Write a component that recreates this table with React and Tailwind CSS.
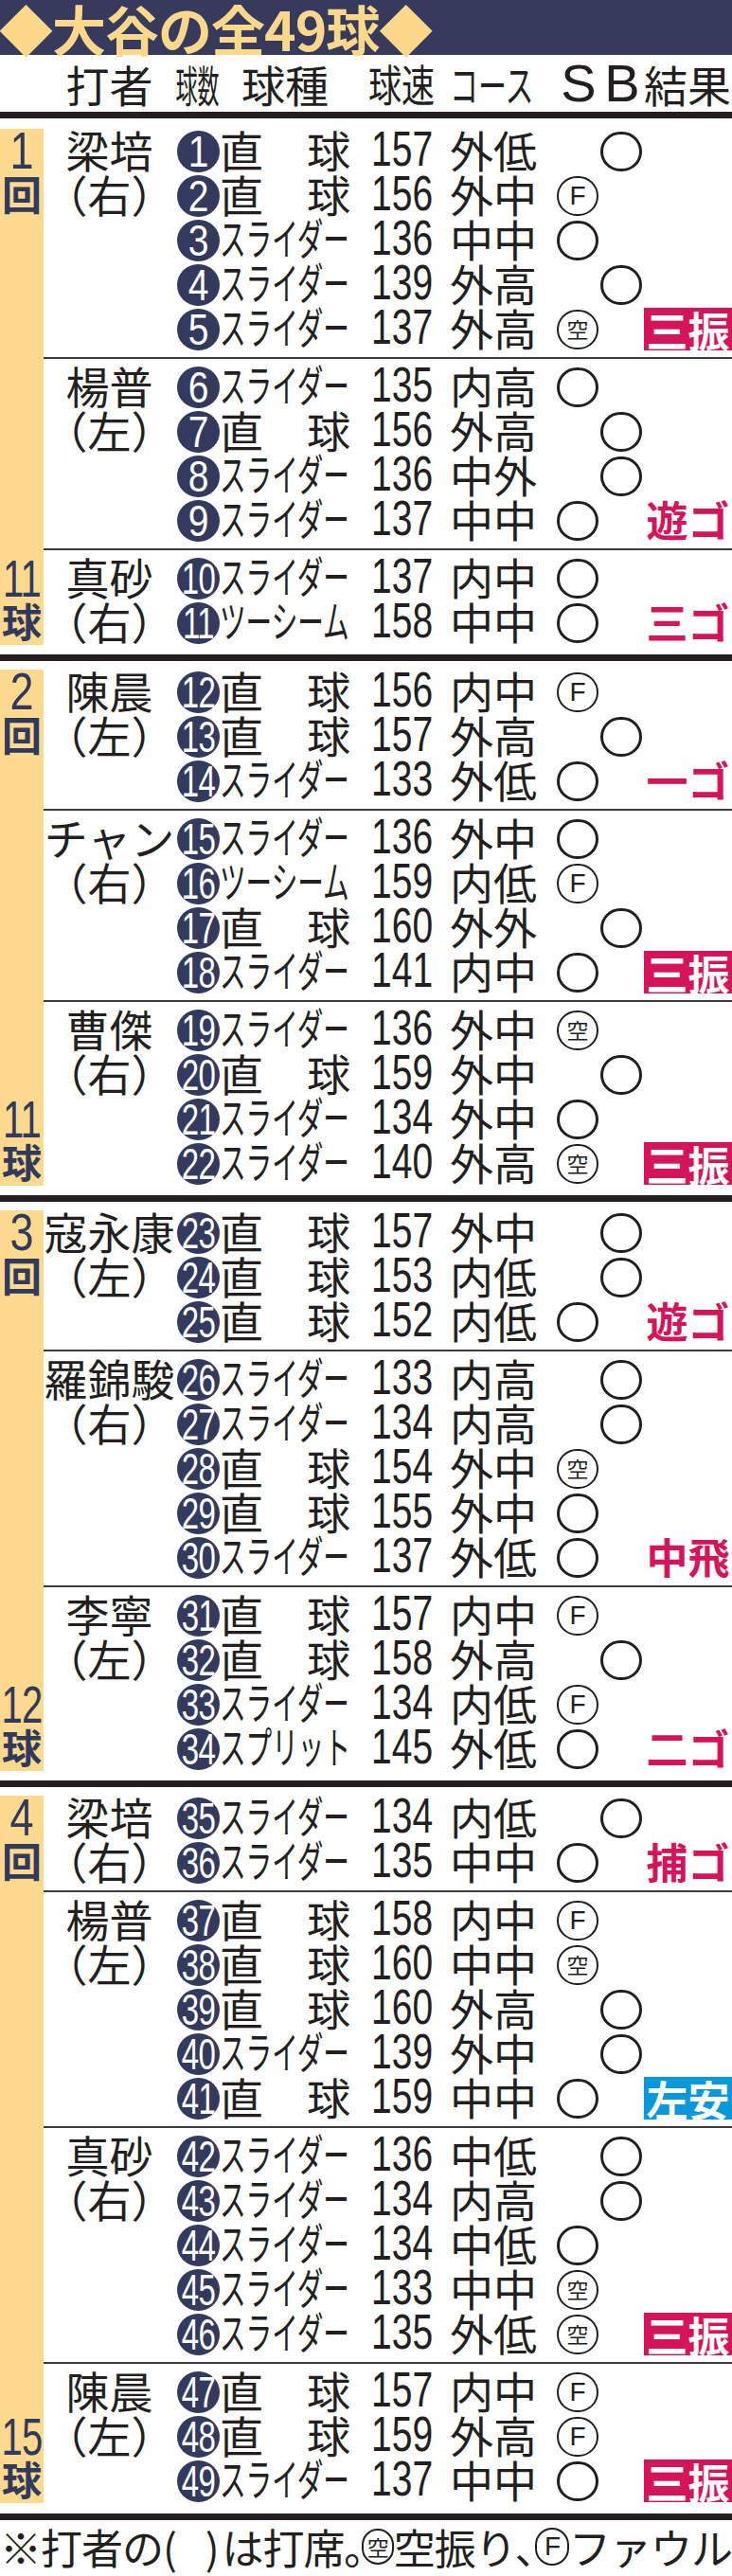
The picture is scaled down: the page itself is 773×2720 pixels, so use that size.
import React from 'react';

const I = [
  { n: '1', total: '11', batters: [
    { name: '梁培', hand: '右', p: [
      [1, '直球', 157, '外低', 'B', 'O'],
      [2, '直球', 156, '外中', 'S', 'F'],
      [3, 'スライダー', 136, '中中', 'S', 'O'],
      [4, 'スライダー', 139, '外高', 'B', 'O'],
      [5, 'スライダー', 137, '外高', 'S', 'K', '三振', 'red'],
    ]},
    { name: '楊普', hand: '左', p: [
      [6, 'スライダー', 135, '内高', 'S', 'O'],
      [7, '直球', 156, '外高', 'B', 'O'],
      [8, 'スライダー', 136, '中外', 'B', 'O'],
      [9, 'スライダー', 137, '中中', 'S', 'O', '遊ゴ', 'text'],
    ]},
    { name: '真砂', hand: '右', p: [
      [10, 'スライダー', 137, '内中', 'S', 'O'],
      [11, 'ツーシーム', 158, '中中', 'S', 'O', '三ゴ', 'text'],
    ]},
  ]},
  { n: '2', total: '11', batters: [
    { name: '陳晨', hand: '左', p: [
      [12, '直球', 156, '内中', 'S', 'F'],
      [13, '直球', 157, '外高', 'B', 'O'],
      [14, 'スライダー', 133, '外低', 'S', 'O', '一ゴ', 'text'],
    ]},
    { name: 'チャン', hand: '右', p: [
      [15, 'スライダー', 136, '外中', 'S', 'O'],
      [16, 'ツーシーム', 159, '内低', 'S', 'F'],
      [17, '直球', 160, '外外', 'B', 'O'],
      [18, 'スライダー', 141, '内中', 'S', 'O', '三振', 'red'],
    ]},
    { name: '曹傑', hand: '右', p: [
      [19, 'スライダー', 136, '外中', 'S', 'K'],
      [20, '直球', 159, '外中', 'B', 'O'],
      [21, 'スライダー', 134, '外中', 'S', 'O'],
      [22, 'スライダー', 140, '外高', 'S', 'K', '三振', 'red'],
    ]},
  ]},
  { n: '3', total: '12', batters: [
    { name: '寇永康', hand: '左', p: [
      [23, '直球', 157, '外中', 'B', 'O'],
      [24, '直球', 153, '内低', 'B', 'O'],
      [25, '直球', 152, '内低', 'S', 'O', '遊ゴ', 'text'],
    ]},
    { name: '羅錦駿', hand: '右', p: [
      [26, 'スライダー', 133, '内高', 'B', 'O'],
      [27, 'スライダー', 134, '内高', 'B', 'O'],
      [28, '直球', 154, '外中', 'S', 'K'],
      [29, '直球', 155, '外中', 'S', 'O'],
      [30, 'スライダー', 137, '外低', 'S', 'O', '中飛', 'text'],
    ]},
    { name: '李寧', hand: '左', p: [
      [31, '直球', 157, '内中', 'S', 'F'],
      [32, '直球', 158, '外高', 'B', 'O'],
      [33, 'スライダー', 134, '内低', 'S', 'F'],
      [34, 'スプリット', 145, '外低', 'S', 'O', '二ゴ', 'text'],
    ]},
  ]},
  { n: '4', total: '15', batters: [
    { name: '梁培', hand: '右', p: [
      [35, 'スライダー', 134, '内低', 'B', 'O'],
      [36, 'スライダー', 135, '中中', 'S', 'O', '捕ゴ', 'text'],
    ]},
    { name: '楊普', hand: '左', p: [
      [37, '直球', 158, '内中', 'S', 'F'],
      [38, '直球', 160, '中中', 'S', 'K'],
      [39, '直球', 160, '外高', 'B', 'O'],
      [40, 'スライダー', 139, '外中', 'B', 'O'],
      [41, '直球', 159, '中中', 'S', 'O', '左安', 'blue'],
    ]},
    { name: '真砂', hand: '右', p: [
      [42, 'スライダー', 136, '中低', 'B', 'O'],
      [43, 'スライダー', 134, '内高', 'B', 'O'],
      [44, 'スライダー', 134, '中低', 'S', 'O'],
      [45, 'スライダー', 133, '中中', 'S', 'K'],
      [46, 'スライダー', 135, '外低', 'S', 'K', '三振', 'red'],
    ]},
    { name: '陳晨', hand: '左', p: [
      [47, '直球', 157, '内中', 'S', 'F'],
      [48, '直球', 159, '外高', 'S', 'F'],
      [49, 'スライダー', 137, '中中', 'S', 'O', '三振', 'red'],
    ]},
  ]},
];

function Ring() {
  return <div className="w-[44px] h-[42px] rounded-full border-[3.5px] border-[#231f20]" />;
}

function FoulMark({ small }) {
  return (
    <div className={small ? "w-[40px] h-[40px] rounded-full border-[2.5px] border-[#231f20] flex items-center justify-center" : "w-[44px] h-[42px] rounded-full border-[2.5px] border-[#231f20] flex items-center justify-center"}>
      <span className="font-['Liberation_Sans',sans-serif] text-[28px] leading-none">F</span>
    </div>
  );
}

function KuMark({ small }) {
  return (
    <div className={small ? "w-[38px] h-[38px] rounded-full border-[2.5px] border-[#231f20] flex items-center justify-center" : "w-[44px] h-[42px] rounded-full border-[2.5px] border-[#231f20] flex items-center justify-center"}>
      <span className="text-[23px] leading-none">空</span>
    </div>
  );
}

function Mark({ m }) {
  if (m === 'F') return <FoulMark />;
  if (m === 'K') return <KuMark />;
  return <Ring />;
}

function NumCircle({ n }) {
  const two = n >= 10;
  return (
    <div className="ml-[2px] w-[45px] h-[44px] rounded-full bg-[#343a5e] flex items-center justify-center">
      <span className={two
        ? "inline-block font-['Liberation_Sans',sans-serif] text-[33px] leading-none text-white scale-y-[1.39] tracking-[-0.7px] translate-y-[1px]"
        : "inline-block font-['Liberation_Sans',sans-serif] text-[39px] leading-none text-white scale-y-[1.18] translate-y-[1px]"}>{n}</span>
    </div>
  );
}

function PitchType({ t }) {
  if (t === '直球') {
    return (
      <div className="flex w-[138px] justify-between text-[46px] leading-none -translate-y-[3px]">
        <span>直</span><span>球</span>
      </div>
    );
  }
  return (
    <span className="inline-block whitespace-nowrap text-[27.6px] leading-none scale-y-[1.667] -translate-y-[3px]">{t}</span>
  );
}

function Result({ r, s }) {
  if (!r) return null;
  if (s === 'red') {
    return <div className="w-[93px] h-[45px] bg-[#d5145a] text-white font-bold text-[44px] leading-none flex items-center justify-center">{r}</div>;
  }
  if (s === 'blue') {
    return <div className="w-[93px] h-[45px] bg-[#0999db] text-white font-bold text-[44px] leading-none flex items-center justify-center">{r}</div>;
  }
  return <div className="w-[93px] h-[45px] text-[#d5145a] font-bold text-[44px] leading-none flex items-center justify-center -translate-y-[2px]">{r}</div>;
}

function PitchRow({ p }) {
  const [num, type, speed, course, col, mark, res, rs] = p;
  return (
    <div className="flex h-[47px] items-center">
      <div className="w-[47px] flex items-center"><NumCircle n={num} /></div>
      <div className="w-[138px] flex items-center"><PitchType t={type} /></div>
      <div className="w-[105px] pl-[22px] flex items-center">
        <span className="inline-block font-['Liberation_Sans',sans-serif] text-[39px] leading-none scale-y-[1.333] -translate-y-[2px]">{speed}</span>
      </div>
      <div className="w-[92px] text-[46px] leading-none whitespace-nowrap -translate-y-[3px]">{course}</div>
      <div className="w-[66px] pl-[21px] flex items-center">{col === 'S' && <Mark m={mark} />}</div>
      <div className="w-[47px] pl-[1px] flex items-center">{col === 'B' && <Mark m={mark} />}</div>
      <div className="w-[93px] flex items-center"><Result r={res} s={rs} /></div>
    </div>
  );
}

function Batter({ b }) {
  return (
    <div className="flex">
      <div className="w-[139px] shrink-0 flex flex-col">
        <div className="h-[47px] flex items-center justify-center text-[46px] leading-none whitespace-nowrap -translate-y-[3px]">{b.name}</div>
        <div className="h-[47px] flex items-center justify-center text-[46px] leading-none whitespace-nowrap -translate-y-[3px]">（{b.hand}）</div>
      </div>
      <div className="flex flex-col">
        {b.p.map((p) => <PitchRow key={p[0]} p={p} />)}
      </div>
    </div>
  );
}

function Inning({ inn }) {
  const two = inn.total.length > 1;
  return (
    <div className="flex">
      <div className="w-[46px] shrink-0 bg-[#fed98e] flex flex-col justify-between text-[#2f3a5e]">
        <div>
          <div className="h-[47px] flex items-center justify-center">
            <span className="inline-block font-['Liberation_Sans',sans-serif] text-[45px] leading-none scale-y-[1.25] -translate-y-[1px]">{inn.n}</span>
          </div>
          <div className="h-[47px] flex items-center justify-center font-bold text-[42px] leading-none -translate-y-[3px]">回</div>
        </div>
        <div>
          <div className="h-[47px] flex items-center justify-center">
            <span className={two
              ? "inline-block font-['Liberation_Sans',sans-serif] text-[40px] leading-none scale-y-[1.4] tracking-[-0.7px] whitespace-nowrap -translate-y-[1px]"
              : "inline-block font-['Liberation_Sans',sans-serif] text-[45px] leading-none scale-y-[1.25]"}>{inn.total}</span>
          </div>
          <div className="h-[47px] flex items-center justify-center font-bold text-[42px] leading-none -translate-y-[3px]">球</div>
        </div>
      </div>
      <div className="flex flex-col">
        {inn.batters.map((b, i) => (
          <React.Fragment key={i}>
            {i > 0 && <div className="py-[6px]"><div className="h-[2px] bg-[#3a3a3a]" /></div>}
            <Batter b={b} />
          </React.Fragment>
        ))}
      </div>
    </div>
  );
}

export default function App() {
  return (
    <div className="w-[773px] h-[2720px] bg-white text-[#231f20] font-['Noto_Sans_CJK_JP',sans-serif] overflow-hidden">
      <div className="h-[58px] bg-[#363b5e] flex items-center">
        <span className="text-[57px] font-bold leading-none text-[#fdd88b] whitespace-nowrap tracking-[-1px] -ml-[1px]">◆大谷の全49球◆</span>
      </div>
      <div className="h-[60px] flex items-center">
        <div className="w-[46px]" />
        <div className="w-[139px] text-center text-[46px] leading-none">打者</div>
        <div className="w-[47px] flex justify-center">
          <span className="inline-block scale-y-[2] text-[23px] leading-none whitespace-nowrap">球数</span>
        </div>
        <div className="w-[138px] text-center text-[46px] leading-none">球種</div>
        <div className="w-[105px] pl-[19px]">
          <span className="inline-block scale-y-[1.314] text-[35px] leading-none whitespace-nowrap">球速</span>
        </div>
        <div className="w-[92px]">
          <span className="inline-block scale-y-[1.533] text-[30px] leading-none whitespace-nowrap">コース</span>
        </div>
        <div className="w-[21px]" />
        <div className="w-[46px] text-center font-['Liberation_Sans',sans-serif] text-[56px] leading-none">S</div>
        <div className="w-[46px] text-center font-['Liberation_Sans',sans-serif] text-[56px] leading-none">B</div>
        <div className="text-[46px] leading-none whitespace-nowrap">結果</div>
      </div>
      <div className="h-[7px] bg-[#231f20]" />
      <div className="pt-[11px]">
        {I.map((inn, i) => (
          <React.Fragment key={inn.n}>
            {i > 0 && <div className="mt-[10px] mb-[9px] h-[7px] bg-[#231f20]" />}
            <Inning inn={inn} />
          </React.Fragment>
        ))}
      </div>
      <div className="mt-[11px] h-[7px] bg-[#231f20]" />
      <div className="h-[56px] flex items-center text-[44px] leading-none whitespace-nowrap tracking-[-1px]">
        <span>※打者の</span>
        <span className="inline-block w-[20px]">(</span>
        <span className="inline-block w-[30px]" />
        <span className="inline-block w-[20px]">)</span>
        <span>は打席</span>
        <span className="inline-block w-[18px]">｡</span>
        <KuMark small />
        <span>空振り</span>
        <span className="inline-block w-[20px]">､</span>
        <FoulMark small />
        <span>ファウル</span>
      </div>
    </div>
  );
}
